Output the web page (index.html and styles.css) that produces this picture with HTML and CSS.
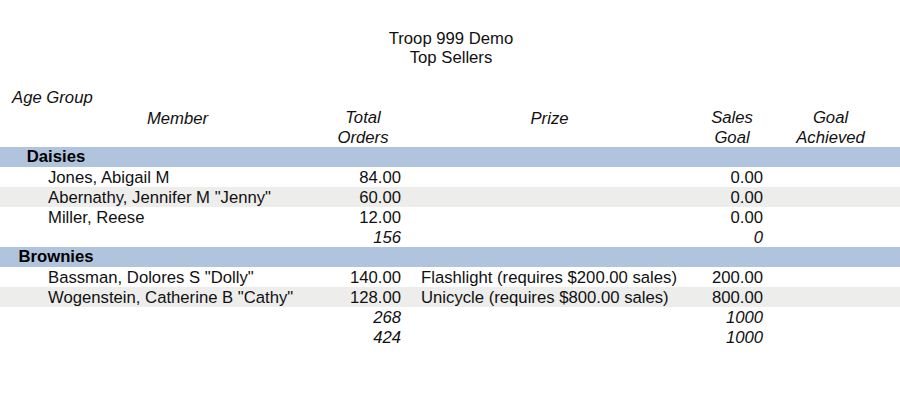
FILE: index.html
```html
<!DOCTYPE html>
<html>
<head>
<meta charset="utf-8">
<link rel="stylesheet" href="styles.css">
</head>
<body>
<div class="report">
  <header class="title">
    <div>Troop 999 Demo</div>
    <div>Top Sellers</div>
  </header>
  <div class="age-label">Age Group</div>
  <div class="grid colhead">
    <div class="c-member">Member</div>
    <div class="c-orders">Total<br>Orders</div>
    <div class="c-prize">Prize</div>
    <div class="c-sales">Sales<br>Goal</div>
    <div class="c-ach">Goal<br>Achieved</div>
  </div>

  <section class="group">
    <div class="band"><span class="group-name">Daisies</span></div>
    <div class="grid row">
      <div class="c-member">Jones, Abigail M</div>
      <div class="c-orders num">84.00</div>
      <div class="c-prize"></div>
      <div class="c-sales num">0.00</div>
    </div>
    <div class="grid row alt">
      <div class="c-member">Abernathy, Jennifer M "Jenny"</div>
      <div class="c-orders num">60.00</div>
      <div class="c-prize"></div>
      <div class="c-sales num">0.00</div>
    </div>
    <div class="grid row">
      <div class="c-member">Miller, Reese</div>
      <div class="c-orders num">12.00</div>
      <div class="c-prize"></div>
      <div class="c-sales num">0.00</div>
    </div>
    <div class="grid row total">
      <div class="c-orders num">156</div>
      <div class="c-sales num">0</div>
    </div>
  </section>

  <section class="group">
    <div class="band"><span class="group-name">Brownies</span></div>
    <div class="grid row">
      <div class="c-member">Bassman, Dolores S "Dolly"</div>
      <div class="c-orders num">140.00</div>
      <div class="c-prize">Flashlight (requires $200.00 sales)</div>
      <div class="c-sales num">200.00</div>
    </div>
    <div class="grid row alt">
      <div class="c-member">Wogenstein, Catherine B "Cathy"</div>
      <div class="c-orders num">128.00</div>
      <div class="c-prize">Unicycle (requires $800.00 sales)</div>
      <div class="c-sales num">800.00</div>
    </div>
    <div class="grid row total">
      <div class="c-orders num">268</div>
      <div class="c-sales num">1000</div>
    </div>
  </section>

  <div class="grid row total">
    <div class="c-orders num">424</div>
    <div class="c-sales num">1000</div>
  </div>
</div>
</body>
</html>
```
FILE: styles.css
```css
html, body {
  margin: 0;
  padding: 0;
  background: #ffffff;
}
body {
  font-family: "Liberation Sans", Arial, sans-serif;
  font-size: 16.7px;
  color: #111;
}
.report {
  width: 900px;
}
.title {
  padding-top: 29px;
  text-align: center;
  line-height: 19px;
  padding-left: 2px;
  height: 35px;
}
.age-label {
  margin-top: 24px;
  padding-left: 12px;
  font-style: italic;
  line-height: 20px;
}
.grid {
  display: grid;
  grid-template-columns: 46px 263px 13px 82px 14px 263px 17px 68px 129px;
}
.c-member { grid-column: 2; padding-left: 2px; white-space: nowrap; }
.c-orders { grid-column: 4; padding-right: 3px; }
.c-prize  { grid-column: 6; padding-left: 3px; white-space: nowrap; }
.c-sales  { grid-column: 8; padding-right: 3px; }
.c-ach    { grid-column: 9; }
.colhead {
  font-style: italic;
  line-height: 19.5px;
  height: 39px;
  text-align: center;
}
.colhead .c-member, .colhead .c-orders, .colhead .c-prize, .colhead .c-sales {
  padding: 0;
}
.colhead .c-member, .colhead .c-prize {
  padding-top: 0.5px;
}
.band {
  background: #b0c4de;
  height: 20px;
  box-sizing: border-box;
  padding-top: 1px;
}
.group-name {
  display: block;
  width: 88px;
  margin-left: 12px;
  text-align: center;
  font-weight: bold;
  line-height: 18px;
  color: #000;
}
.row {
  height: 20px;
  box-sizing: border-box;
  padding-top: 1px;
  line-height: 19px;
}
.row.alt {
  background: #ededeb;
}
.num {
  text-align: right;
}
.total {
  font-style: italic;
}
```
